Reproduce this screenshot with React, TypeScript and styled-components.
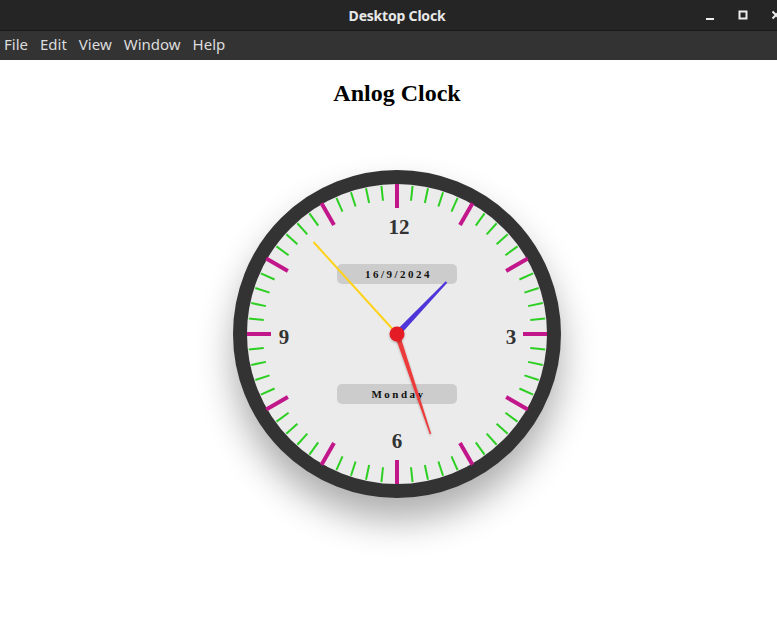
import React from "react";
import styled, { createGlobalStyle } from "styled-components";

const Global = createGlobalStyle`
  html, body { margin: 0; padding: 0; background: #ffffff; overflow: hidden; }
  #root { width: 794px; }
`;

const Window = styled.div`
  width: 794px;
  height: 624px;
  display: flex;
  flex-direction: column;
  background: #ffffff;
`;

const TitleBar = styled.div`
  height: 30px;
  background: #252525;
  border-bottom: 1px solid #1a1a1a;
  position: relative;
  display: flex;
  align-items: center;
  justify-content: center;
`;

const Title = styled.div`
  font-family: "Noto Sans", sans-serif;
  font-weight: 700;
  font-size: 14px;
  color: #e8e8e8;
  letter-spacing: -0.2px;
`;

const Controls = styled.div`
  position: absolute;
  right: 12px;
  top: 0;
  height: 30px;
  display: flex;
  align-items: center;
  gap: 22px;
`;

const CtrlBtn = styled.div`
  width: 11px;
  height: 11px;
  display: flex;
  align-items: center;
  justify-content: center;
  color: #eeeeee;
`;

const MenuBar = styled.div`
  height: 29px;
  box-sizing: border-box;
  padding: 0 0 3px 4px;
  background: #333333;
  display: flex;
  align-items: center;
  gap: 12px;
`;

const MenuItem = styled.span`
  font-family: "Noto Sans", sans-serif;
  font-size: 15px;
  color: #dddddd;
`;

const Content = styled.div`
  flex: 1;
  display: flex;
  flex-direction: column;
  align-items: center;
`;

const Heading = styled.h2`
  font-family: "Liberation Serif", serif;
  font-weight: 700;
  font-size: 24px;
  color: #000;
  margin: 20px 0 0 0;
  line-height: 27px;
`;

const ClockBody = styled.div`
  margin-top: 63px;
  width: 300px;
  height: 300px;
  border: 14px solid #333333;
  border-radius: 50%;
  background: #ebebeb;
  position: relative;
  box-shadow: 0 22px 36px rgba(0, 0, 0, 0.32);
`;

const Face = styled.svg`
  position: absolute;
  inset: 0;
  width: 300px;
  height: 300px;
`;

const Numeral = styled.div<{ $x: number; $y: number }>`
  position: absolute;
  left: ${(p) => p.$x}px;
  top: ${(p) => p.$y}px;
  transform: translate(-50%, -50%);
  font-family: "Liberation Serif", serif;
  font-weight: 700;
  font-size: 21px;
  color: #333333;
  line-height: 1;
`;

const InfoBox = styled.div<{ $y: number }>`
  position: absolute;
  left: 90px;
  top: ${(p) => p.$y}px;
  width: 120px;
  height: 20px;
  border-radius: 5px;
  background: #cccccc;
  display: flex;
  align-items: center;
  justify-content: center;
  font-family: "Liberation Serif", serif;
  font-weight: 700;
  font-size: 11px;
  letter-spacing: 2.5px;
  color: #111111;
  padding-left: 3px;
  box-sizing: border-box;
`;

const HandsLayer = styled.svg`
  position: absolute;
  inset: 0;
  width: 300px;
  height: 300px;
  overflow: visible;
`;

const ticks = Array.from({ length: 60 }, (_, i) => i);

function polar(r: number, deg: number) {
  const a = (deg * Math.PI) / 180;
  return { x: 150 + r * Math.sin(a), y: 150 - r * Math.cos(a) };
}

function taper(tipX: number, tipY: number, base: number, tip: number) {
  const cx = 150, cy = 150;
  const dx = tipX, dy = tipY;
  const len = Math.hypot(dx, dy);
  const nx = -dy / len, ny = dx / len;
  const pts = [
    [cx + nx * base / 2, cy + ny * base / 2],
    [cx + dx + nx * tip / 2, cy + dy + ny * tip / 2],
    [cx + dx - nx * tip / 2, cy + dy - ny * tip / 2],
    [cx - nx * base / 2, cy - ny * base / 2],
  ];
  return pts.map((p) => p.join(",")).join(" ");
}

export default function App() {
  return (
    <>
      <Global />
      <Window>
        <TitleBar>
          <Title>Desktop Clock</Title>
          <Controls>
            <CtrlBtn>
              <svg width="11" height="11" viewBox="0 0 11 11">
                <rect x="1" y="8" width="8" height="2" fill="#eeeeee" />
              </svg>
            </CtrlBtn>
            <CtrlBtn>
              <svg width="11" height="11" viewBox="0 0 11 11">
                <rect x="1.5" y="1.5" width="7" height="7" fill="none" stroke="#eeeeee" strokeWidth="2" />
              </svg>
            </CtrlBtn>
            <CtrlBtn>
              <svg width="11" height="11" viewBox="0 0 11 11">
                <path d="M1.5 1.5 L8.5 8.5 M8.5 1.5 L1.5 8.5" stroke="#eeeeee" strokeWidth="2" />
              </svg>
            </CtrlBtn>
          </Controls>
        </TitleBar>
        <MenuBar>
          <MenuItem>File</MenuItem>
          <MenuItem>Edit</MenuItem>
          <MenuItem>View</MenuItem>
          <MenuItem>Window</MenuItem>
          <MenuItem>Help</MenuItem>
        </MenuBar>
        <Content>
          <Heading>Anlog Clock</Heading>
          <ClockBody>
            <Face viewBox="0 0 300 300">
              {ticks.map((i) => {
                const deg = i * 6;
                const major = i % 5 === 0;
                const a = polar(major ? 151 : 149, deg);
                const b = polar(major ? 126 : 134, deg);
                return (
                  <line
                    key={i}
                    x1={a.x}
                    y1={a.y}
                    x2={b.x}
                    y2={b.y}
                    stroke={major ? "#c2168b" : "#2ccf22"}
                    strokeWidth={major ? 4 : 2}
                  />
                );
              })}
            </Face>
            <Numeral $x={152} $y={43}>12</Numeral>
            <Numeral $x={264} $y={153}>3</Numeral>
            <Numeral $x={150} $y={257}>6</Numeral>
            <Numeral $x={37} $y={153}>9</Numeral>
            <InfoBox $y={80}>16/9/2024</InfoBox>
            <InfoBox $y={200}>Monday</InfoBox>
            <HandsLayer viewBox="0 0 300 300">
              <defs>
                <filter id="sh" x="-50%" y="-50%" width="200%" height="200%">
                  <feDropShadow dx="0" dy="1" stdDeviation="1" floodColor="#000" floodOpacity="0.3" />
                </filter>
              </defs>
              <line x1={150} y1={150} x2={150 - 83.5} y2={150 - 92} stroke="#ffd21a" strokeWidth={2} />
              <polygon points={taper(49.5, -52, 6, 2)} fill="#4d35d9" />
              <polygon points={taper(33.5, 100, 5, 1.5)} fill="#ec3a3a" filter="url(#sh)" />
              <circle cx={150} cy={150} r={7.5} fill="#e41f26" filter="url(#sh)" />
            </HandsLayer>
          </ClockBody>
        </Content>
      </Window>
    </>
  );
}
